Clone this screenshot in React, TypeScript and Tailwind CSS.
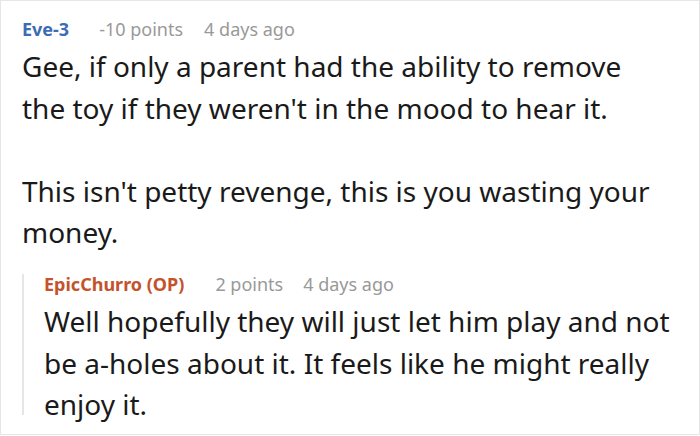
export default function App() {
  return (
    <div className="w-[700px] h-[436px] bg-white font-['Noto_Sans',sans-serif]">
      <div className="h-[435px] border border-[#e6e6e6] pl-[21px] pt-[15px] overflow-hidden">
        {/* top-level comment */}
        <div className="flex items-baseline text-[18px] leading-[27px]">
          <span className="font-bold text-[#3c6cb4]">Eve-3</span>
          <span className="ml-[30px] text-[#999999]">-10 points</span>
          <span className="ml-[21px] text-[#999999]">4 days ago</span>
        </div>
        <div className="mt-[3px] w-[640px] text-[28px] leading-[41.6px] text-[#1a1a1a]">
          <p>Gee, if only a parent had the ability to remove the toy if they weren't in the mood to hear it.</p>
          <p className="mt-[41.6px]">This isn't petty revenge, this is you wasting your money.</p>
        </div>

        {/* reply */}
        <div className="flex mt-[17px]">
          <div className="w-[2px] h-[141px] mt-[3px] bg-[#e6e6e6] shrink-0" />
          <div className="pl-[20px]">
            <div className="flex items-baseline text-[18px] leading-[27px]">
              <span className="font-bold text-[#c4532b]">EpicChurro (OP)</span>
              <span className="ml-[31px] text-[#999999]">2 points</span>
              <span className="ml-[20px] text-[#999999]">4 days ago</span>
            </div>
            <p className="mt-[3px] w-[630px] text-[28px] leading-[41.6px] text-[#1a1a1a]">
              Well hopefully they will just let him play and not be a-holes about it. It feels like he might really enjoy it.
            </p>
          </div>
        </div>
      </div>
    </div>
  );
}
